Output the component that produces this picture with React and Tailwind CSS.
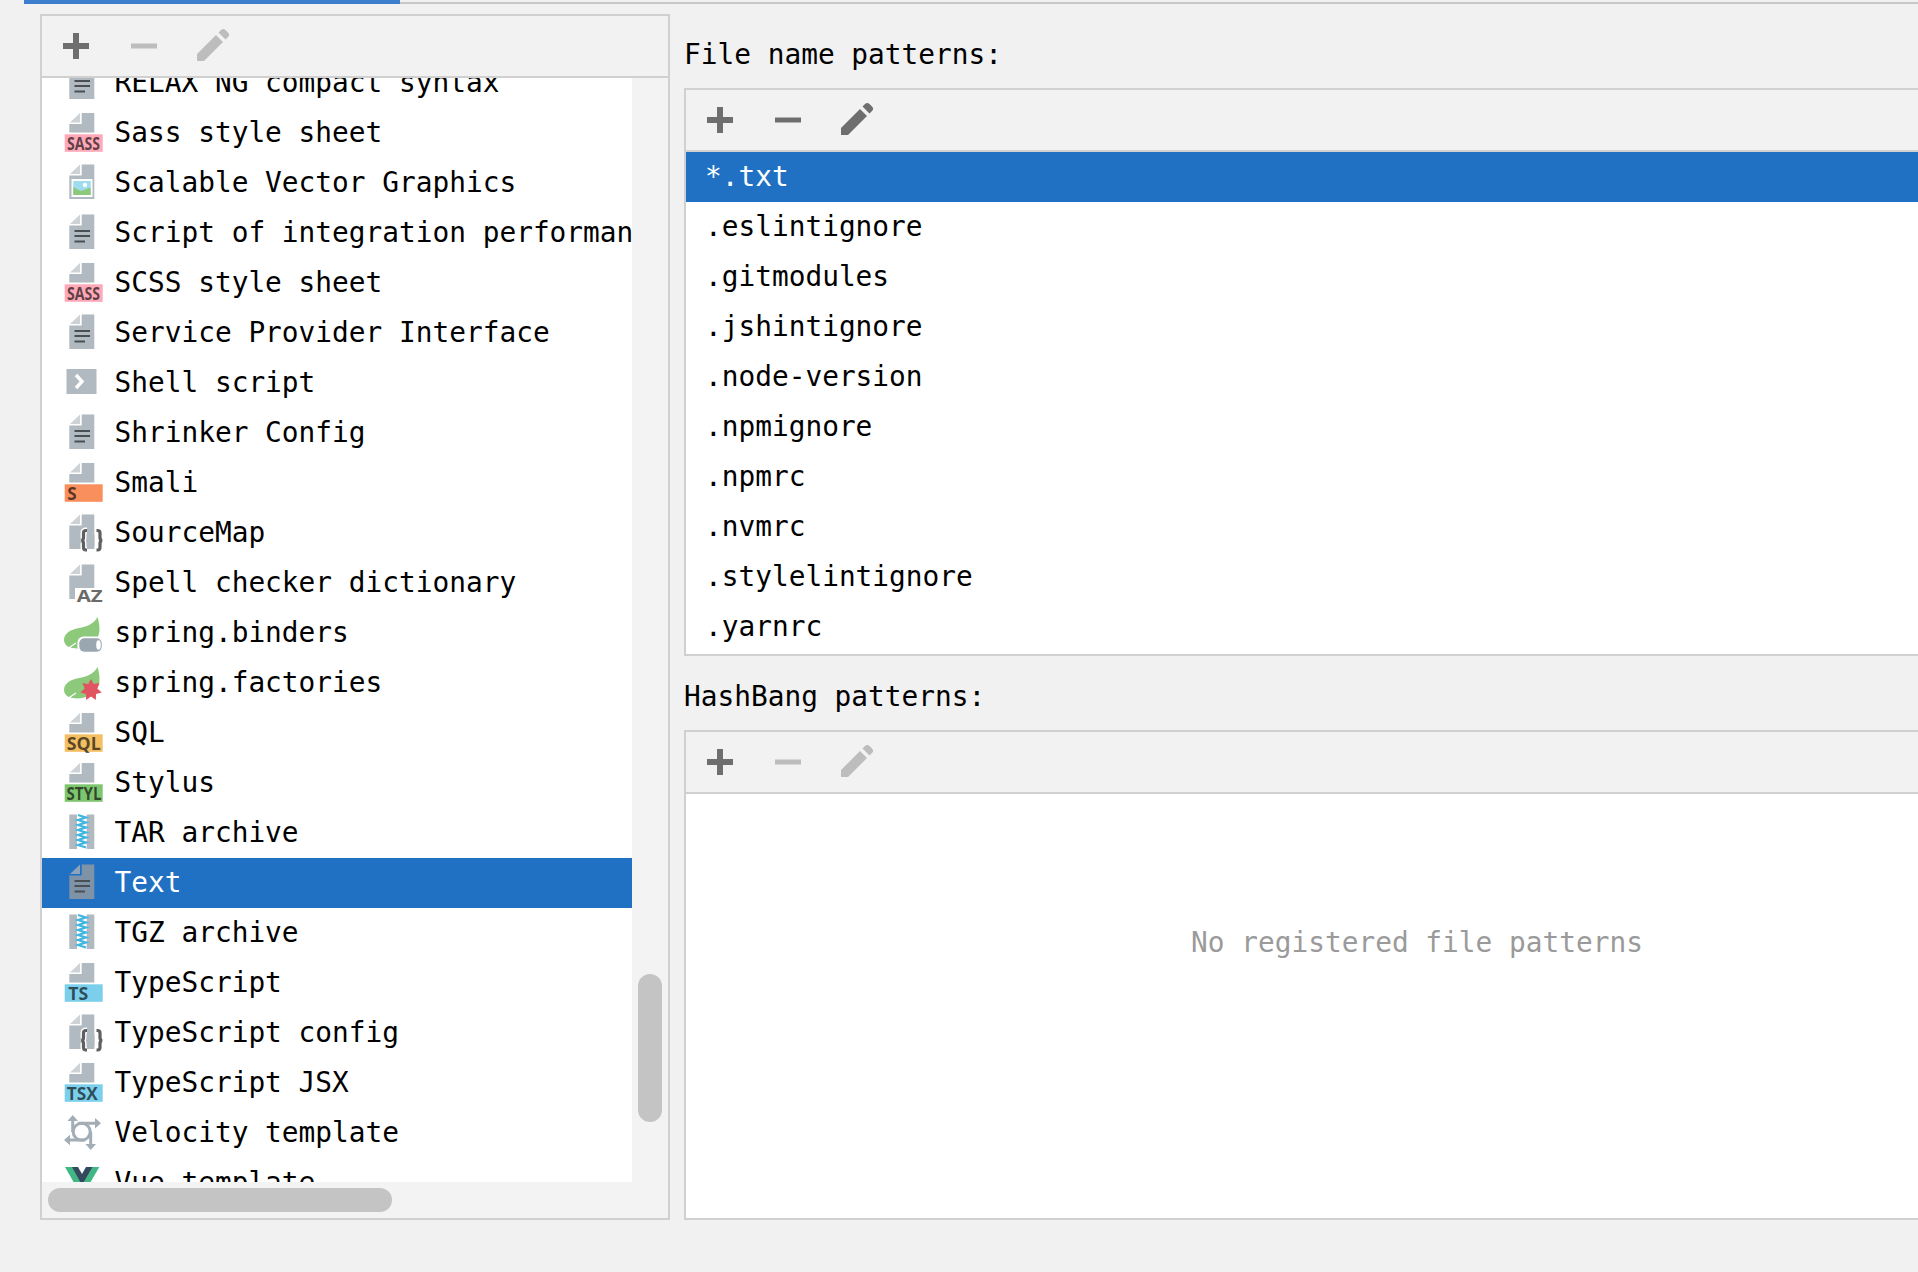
import React from 'react'

const GRAY = '#b1bac0'

// file sheet with the folded corner, top and bottom are row-relative
const Sheet = ({ top = 6.5, bottom = 41, fold = '#cdd2d6', body = GRAY }) => (
  <>
    <path d={`M6 ${top + 9.5}L16 ${top}V${top + 9.5}Z`} fill={fold} />
    <path d={`M17.7 ${top}H30.3V${bottom}H5.3V${top + 11}H17.7Z`} fill={body} />
  </>
)

const Svg = ({ children }) => (
  <svg width="40" height="50" viewBox="0 0 40 50" className="shrink-0 overflow-visible">
    {children}
  </svg>
)

const TextDoc = ({ selected }) => (
  <Svg>
    {selected ? <Sheet fold="#8ea3b8" body="#7f93a8" /> : <Sheet />}
    <path d="M10.500 22H26V24H10.500ZM10.500 27H26V29H10.500ZM10.500 32.500H21V34.500H10.500Z" fill="#4a4f54" />
  </Svg>
)

const Badge = ({ label, bg, x = 3, len }) => (
  <Svg>
    <Sheet top={5} bottom={24.500} />
    <rect x="0.700" y="26.300" width="38" height="17.500" fill={bg} />
    <text
      x={x}
      y="41.500"
      fontFamily="'Open Sans', sans-serif"
      fontWeight="700"
      fontSize="17"
      fill="#000"
      fillOpacity="0.65"
      textLength={len}
      lengthAdjust="spacingAndGlyphs"
    >
      {label}
    </text>
  </Svg>
)

const Picture = () => (
  <Svg>
    <Sheet />
    <rect x="7.500" y="21" width="21" height="18" fill="#fff" />
    <rect x="9.300" y="23" width="17.400" height="14" fill="#9edcf0" />
    <path d="M9.300 37V29L17 33L26.700 29.500V37Z" fill="#8cc97a" />
    <circle cx="21" cy="27" r="2.200" fill="#fff" />
  </Svg>
)

const Shell = () => (
  <Svg>
    <rect x="2.500" y="11" width="30" height="25" fill={GRAY} />
    <path d="M12 17L18 23.500L12 30" fill="none" stroke="#fff" strokeWidth="3.400" />
  </Svg>
)

const BRACES =
  'M23 22.500H22Q19.500 22.500 19.500 25V29.500Q19.500 32 17.500 32.500Q19.500 33 19.500 35.500V39.500Q19.500 42 22 42H23M32.500 22.500H33.500Q36 22.500 36 25V29.500Q36 32 38 32.500Q36 33 36 35.500V39.500Q36 42 33.500 42H32.500'

const Braces = () => (
  <Svg>
    <Sheet />
    <path d={BRACES} fill="none" stroke="#fff" strokeWidth="6" />
    <rect x="25" y="25.500" width="5.500" height="14" rx="2" fill={GRAY} />
    <path d={BRACES} fill="none" stroke="#5f5f5f" strokeWidth="3.200" />
  </Svg>
)

const Spell = () => (
  <Svg>
    <Sheet />
    <rect x="11" y="30" width="28" height="16" fill="#fff" />
    <text
      x="12.700"
      y="43.700"
      fontFamily="'Open Sans', sans-serif"
      fontWeight="700"
      fontSize="16"
      fill="#6a6a6a"
      textLength="26"
      lengthAdjust="spacingAndGlyphs"
    >
      AZ
    </text>
  </Svg>
)

const Leaf = () => (
  <>
    <path
      d="M33.500 9C30 16 22 19 15 20C6 21.500 0 26 0 32C0 35 2 38 5 39C8 40 12 41 18 40C30 38 36 30 35.500 20C35.300 16 34.500 12 33.500 9Z"
      fill="#8cc97a"
    />
    <path d="M3 41L12 35" stroke="#fff" strokeWidth="1.200" />
  </>
)

const SpringBinders = () => (
  <Svg>
    <Leaf />
    <rect x="13.500" y="28.500" width="26" height="17" rx="6" fill="#fff" />
    <rect x="15.300" y="30.300" width="22.400" height="13.400" rx="5" fill="#9aa7b1" />
    <ellipse cx="34.500" cy="37" rx="2.300" ry="4.700" fill="#fff" />
  </Svg>
)

const SpringFactories = () => (
  <Svg>
    <Leaf />
    <path
      d="M27 21L29.800 26.100L35.600 25.100L33.300 30.600L37.700 34.400L32.100 36.050L31.800 41.900L27 38.500L22.200 41.900L21.900 36.050L16.300 34.400L20.700 30.600L18.400 25.100L24.200 26.100Z"
      fill="#e05561"
    />
  </Svg>
)

const Zip = () => (
  <Svg>
    <rect x="5.300" y="6.500" width="7.700" height="34.500" fill={GRAY} />
    <rect x="22.700" y="6.500" width="7.600" height="34.500" fill={GRAY} />
    <path
      d="M14 7L22 9.500L14 12L22 14.500L14 17L22 19.500L14 22L22 24.500L14 27L22 29.500L14 32L22 34.500L14 37L22 39.500"
      fill="none"
      stroke="#40b6e0"
      strokeWidth="2.200"
    />
  </Svg>
)

const Velocity = () => (
  <Svg>
    <path d="M8.700 10V24M33 15.300H14M2 32H21M26.700 38V24" fill="none" stroke="#a3adb5" strokeWidth="3" />
    <circle cx="17.700" cy="23.700" r="8.500" fill="none" stroke="#a3adb5" strokeWidth="3" />
    <path d="M8.700 7L3.500 13H14ZM37 15.300L31 10V20.500ZM0 32L6 26.700V37.300ZM26.700 42L21.500 36H32Z" fill="#a3adb5" />
  </Svg>
)

const Vue = () => (
  <Svg>
    <path d="M1 9H35.300L18 39Z" fill="#41b883" />
    <path d="M8 9H28.500L18 27Z" fill="#35495e" />
    <path d="M14 9H22L18 16Z" fill="#fff" />
  </Svg>
)

const Plus = ({ on }) => (
  <svg width="36" height="36" viewBox="0 0 36 36" className="shrink-0">
    <path d="M15 5H21V15H31V21H21V31H15V21H5V15H15Z" fill={on ? '#6e6e6e' : '#bdbdbd'} />
  </svg>
)

const Minus = ({ on }) => (
  <svg width="36" height="36" viewBox="0 0 36 36" className="shrink-0">
    <path d="M5 15.500H31V20.500H5Z" fill={on ? '#6e6e6e' : '#bdbdbd'} />
  </svg>
)

const Pencil = ({ on }) => (
  <svg width="36" height="36" viewBox="0 0 36 36" className="mb-[4px] ml-px shrink-0">
    <path
      d="M2 28L21 9L28 16L9 35H2ZM23.500 6.500L26 4C27.500 2.500 29 2.500 30.500 4L33 6.500C34.500 8 34.500 9.500 33 11L30.500 13.500Z"
      fill={on ? '#6e6e6e' : '#bdbdbd'}
    />
  </svg>
)

const Toolbar = ({ minus, pencil }) => (
  <div className="flex h-[62px] items-center gap-[32px] border-b-2 border-[#d0d0d0] bg-[#f2f2f2] pl-[16px]">
    <Plus on />
    <Minus on={minus} />
    <Pencil on={pencil} />
  </div>
)

const fileTypes = [
  ['RELAX NG compact syntax', <TextDoc />],
  ['Sass style sheet', <Badge label="SASS" bg="#ffa9b8" len={33} />],
  ['Scalable Vector Graphics', <Picture />],
  ['Script of integration performance', <TextDoc />],
  ['SCSS style sheet', <Badge label="SASS" bg="#ffa9b8" len={33} />],
  ['Service Provider Interface', <TextDoc />],
  ['Shell script', <Shell />],
  ['Shrinker Config', <TextDoc />],
  ['Smali', <Badge label="S" bg="#f98f5c" x={3.300} len={9.400} />],
  ['SourceMap', <Braces />],
  ['Spell checker dictionary', <Spell />],
  ['spring.binders', <SpringBinders />],
  ['spring.factories', <SpringFactories />],
  ['SQL', <Badge label="SQL" bg="#f4bf63" x={2.700} len={34} />],
  ['Stylus', <Badge label="STYL" bg="#7fc56f" x={2.500} len={35} />],
  ['TAR archive', <Zip />],
  ['Text', <TextDoc selected />, true],
  ['TGZ archive', <Zip />],
  ['TypeScript', <Badge label="TS" bg="#7bcfec" x={4.300} len={20} />],
  ['TypeScript config', <Braces />],
  ['TypeScript JSX', <Badge label="TSX" bg="#7bcfec" x={2.700} len={31} />],
  ['Velocity template', <Velocity />],
  ['Vue template', <Vue />],
]

const patterns = ['*.txt', '.eslintignore', '.gitmodules', '.jshintignore', '.node-version', '.npmignore', '.npmrc', '.nvmrc', '.stylelintignore', '.yarnrc']

export default function App() {
  return (
    <div className="h-[1272px] w-[1918px] overflow-hidden bg-[#f1f1f1] font-['DejaVu_Sans_Mono',monospace] text-[27.8px] text-black">
      <div className="flex pl-[24px]">
        <div className="h-[4px] w-[376px] bg-[#3d7fce]" />
        <div className="mt-[2px] h-[2px] flex-1 bg-[#c8c8c8]" />
      </div>

      <div className="flex gap-[14px] pt-[10px] pl-[40px]">
        {/* file types */}
        <div className="w-[630px] shrink-0 border-2 border-[#d0d0d0] bg-[#f3f3f3]">
          <Toolbar />
          <div className="flex h-[1104px]">
            <div className="w-[590px] shrink-0 overflow-hidden bg-white">
              <div className="-mt-[20px]">
                {fileTypes.map(([name, icon, selected]) => (
                  <div
                    key={name}
                    className={`flex h-[50px] items-center whitespace-nowrap pl-[22px] ${selected ? 'bg-[#2070c4] text-white' : ''}`}
                  >
                    {icon}
                    <span className="ml-[10.5px]">{name}</span>
                  </div>
                ))}
              </div>
            </div>
            <div className="pl-[6px] pt-[896px]">
              <div className="h-[148px] w-[24px] rounded-full bg-[#c4c4c4]" />
            </div>
          </div>
          <div className="h-[36px] p-[6px]">
            <div className="h-[24px] w-[344px] rounded-full bg-[#c4c4c4]" />
          </div>
        </div>

        {/* patterns */}
        <div className="flex w-[1460px] shrink-0 flex-col">
          <div className="mt-[16px] mb-[8px] flex h-[50px] items-center">File name patterns:</div>
          <div className="border-2 border-[#d0d0d0] bg-white">
            <Toolbar minus pencil />
            <div className="pb-[2px]">
              {patterns.map((p, i) => (
                <div
                  key={p}
                  className={`flex h-[50px] items-center pl-[19px] ${i === 0 ? 'bg-[#2070c4] text-white' : ''}`}
                >
                  {p}
                </div>
              ))}
            </div>
          </div>
          <div className="mt-[16px] mb-[8px] flex h-[50px] items-center">HashBang patterns:</div>
          <div className="border-2 border-[#d0d0d0] bg-white">
            <Toolbar />
            <div className="h-[424px] pt-[124px] pl-[6px] text-center leading-[50px] text-[#9a9a9a]">
              No registered file patterns
            </div>
          </div>
        </div>
      </div>
    </div>
  )
}
